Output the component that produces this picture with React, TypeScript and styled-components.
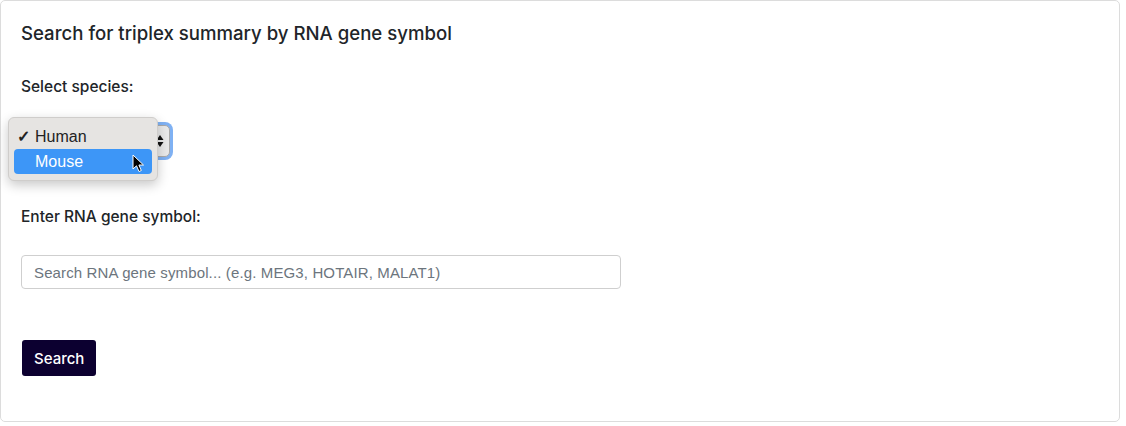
import React from 'react';
import styled, {createGlobalStyle} from 'styled-components';

const GlobalStyle = createGlobalStyle`
  body {
    margin: 0;
    font-family: "Liberation Sans", Arial, sans-serif;
    color: #212529;
    background: #fff;
  }
`;

const Card = styled.div`
  box-sizing: border-box;
  width: 1120px;
  height: 422px;
  border: 1px solid #dcdcdc;
  border-radius: 5px;
  padding: 21px 20px;
  display: flex;
  flex-direction: column;
  align-items: flex-start;
`;

const Title = styled.h2`
  margin: 0;
  font-family: Inter, "Liberation Sans", sans-serif;
  font-size: 18.6px;
  line-height: 22px;
  font-weight: 500;
`;

const FieldLabel = styled.label<{$top: number}>`
  display: block;
  margin-top: ${p => p.$top}px;
  font-family: Inter, "Liberation Sans", sans-serif;
  font-size: 15.5px;
  line-height: 20px;
  font-weight: 500;
`;

const SelectWrap = styled.div`
  position: relative;
  margin-top: 28px;
`;

const SelectBox = styled.div`
  box-sizing: border-box;
  width: 149px;
  height: 32px;
  border: 1px solid #a9a9a9;
  border-radius: 5px;
  background: #e9e9e9;
  box-shadow: 0 0 0 3px #7fb1f3;
  display: flex;
  align-items: center;
  justify-content: flex-end;
  padding-right: 5px;
`;

const Menu = styled.ul`
  position: absolute;
  left: -13px;
  top: -8px;
  box-sizing: border-box;
  width: 150px;
  margin: 0;
  padding: 6px 5px;
  list-style: none;
  background: #e6e4e2;
  border: 1px solid #cfcdcb;
  border-radius: 6px;
  box-shadow: 0 4px 12px rgba(0, 0, 0, 0.22);
`;

const MenuItem = styled.li<{$active?: boolean}>`
  position: relative;
  height: 25px;
  line-height: 25px;
  padding-left: 21px;
  border-radius: 4px;
  font-size: 16px;
  color: ${p => p.$active ? '#fff' : '#222'};
  background: ${p => p.$active ? '#3d96f7' : 'transparent'};
`;

const Check = styled.span`
  position: absolute;
  left: 3px;
  top: 0;
  font-weight: bold;
`;

const Pointer = styled.svg`
  position: absolute;
  left: 118px;
  top: 5px;
`;

const TextInput = styled.input`
  box-sizing: border-box;
  margin-top: 28px;
  width: 600px;
  height: 34px;
  border: 1px solid #cfcfcf;
  border-radius: 4px;
  padding: 0 12px;
  font-family: inherit;
  font-size: 15px;
  letter-spacing: 0.13px;
  color: #212529;
  outline: none;
  &::placeholder {
    color: #6c757d;
  }
`;

const SearchButton = styled.button`
  margin-top: 51px;
  margin-left: 1px;
  height: 36px;
  padding: 0 12px;
  border: none;
  border-radius: 3px;
  background: #0c0030;
  color: #fff;
  font-family: Inter, "Liberation Sans", sans-serif;
  font-size: 15px;
  font-weight: 500;
`;

function Arrows() {
  return (
    <svg width="8" height="14" viewBox="0 0 8 14">
      <path d="M4 1 L7.5 6 H0.5 Z" fill="#111"/>
      <path d="M4 13 L7.5 8 H0.5 Z" fill="#111"/>
    </svg>
  );
}

function App() {
  return (
    <>
      <GlobalStyle/>
      <Card>
        <Title>Search for triplex summary by RNA gene symbol</Title>
        <FieldLabel $top={33}>Select species:</FieldLabel>
        <SelectWrap>
          <SelectBox><Arrows/></SelectBox>
          <Menu>
            <MenuItem><Check>✓</Check>Human</MenuItem>
            <MenuItem $active>
              Mouse
              <Pointer width="13" height="19" viewBox="0 0 13 19">
                <path d="M1 1 L1 15 L4.5 11.8 L7 17.5 L9.3 16.5 L6.9 11 L11.5 11 Z"
                  fill="#000" stroke="#fff" strokeWidth="1" strokeLinejoin="round"/>
              </Pointer>
            </MenuItem>
          </Menu>
        </SelectWrap>
        <FieldLabel $top={50}>Enter RNA gene symbol:</FieldLabel>
        <TextInput placeholder="Search RNA gene symbol... (e.g. MEG3, HOTAIR, MALAT1)"/>
        <SearchButton>Search</SearchButton>
      </Card>
    </>
  );
}

export default App;
